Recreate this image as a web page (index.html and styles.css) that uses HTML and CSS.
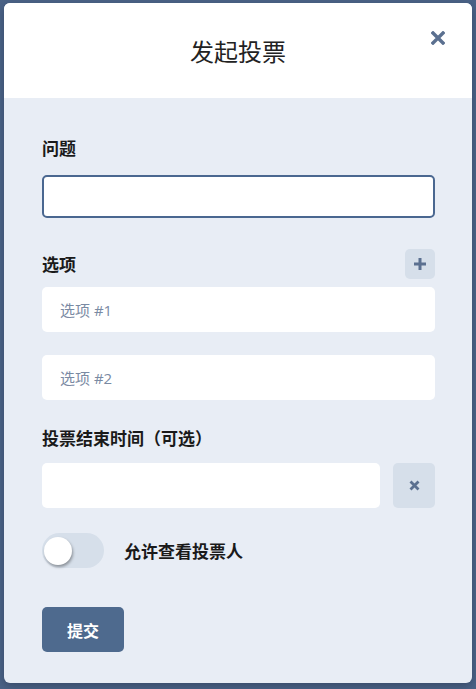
FILE: index.html
```html
<!DOCTYPE html>
<html lang="zh">
<head>
<meta charset="utf-8">
<link rel="stylesheet" href="styles.css">
</head>
<body>
<div class="modal">
  <div class="header">
    <h1 class="title">发起投票</h1>
    <button class="close" aria-label="关闭">
      <svg width="14" height="14" viewBox="0 0 14 14"><path d="M2 2L12 12M12 2L2 12" stroke="#5b7090" stroke-width="3.4" stroke-linecap="square"/></svg>
    </button>
  </div>
  <div class="body">
    <div class="label">问题</div>
    <input class="field field-focus" type="text">
    <div class="row-head">
      <div class="label">选项</div>
      <button class="icon-btn plus" aria-label="添加">
        <svg width="14" height="14" viewBox="0 0 14 14"><path d="M7 1V13M1 7H13" stroke="#5b7090" stroke-width="3"/></svg>
      </button>
    </div>
    <input class="field opt1" type="text" placeholder="选项 #1">
    <input class="field opt2" type="text" placeholder="选项 #2">
    <div class="label time-label">投票结束时间（可选）</div>
    <div class="date-row">
      <input class="field date" type="text">
      <button class="icon-btn clear" aria-label="清除">
        <svg width="11" height="11" viewBox="0 0 11 11"><path d="M1.5 1.5L9.5 9.5M9.5 1.5L1.5 9.5" stroke="#5b7090" stroke-width="2.8"/></svg>
      </button>
    </div>
    <div class="toggle-row">
      <span class="toggle"><span class="knob"></span></span>
      <span class="toggle-label">允许查看投票人</span>
    </div>
    <button class="submit">提交</button>
  </div>
</div>
</body>
</html>
```

FILE: styles.css
```css
* { box-sizing: border-box; }
html, body { margin: 0; padding: 0; }
body {
  background: #4b6387;
  font-family: "Noto Sans CJK SC", "Noto Sans", sans-serif;
  width: 476px;
  height: 689px;
  overflow: hidden;
}
.modal {
  margin: 3px 4px 0 4px;
  width: 468px;
  height: 680px;
  border-radius: 6px;
  overflow: hidden;
  background: #e8edf5;
  box-shadow: 0 3px 8px rgba(20, 30, 50, 0.35);
  display: flex;
  flex-direction: column;
}
.header {
  position: relative;
  height: 95px;
  background: #ffffff;
  display: flex;
  align-items: center;
  justify-content: center;
}
.title {
  margin: 0;
  font-size: 24px;
  font-weight: 400;
  color: #222;
  line-height: 32px;
}
.close {
  position: absolute;
  right: 27px;
  top: 28px;
  width: 14px;
  height: 14px;
  padding: 0;
  border: 0;
  background: none;
  display: flex;
}
.body {
  padding: 37px 37px 0 38px;
  display: flex;
  flex-direction: column;
  align-items: flex-start;
}
.label {
  font-size: 17px;
  font-weight: 700;
  line-height: 26px;
  color: #1a1a1a;
}
.field {
  display: block;
  width: 393px;
  height: 45px;
  border: 0;
  border-radius: 5px;
  background: #fff;
  padding: 0 18px;
  font-family: "Open Sans", "Noto Sans CJK SC", sans-serif;
  font-size: 15px;
  outline: none;
}
.field::placeholder { color: #7a8aa3; }
.field-focus {
  margin-top: 14px;
  height: 43px;
  border: 2px solid #4a6790;
}
.row-head {
  margin-top: 31px;
  width: 393px;
  height: 30px;
  display: flex;
  justify-content: space-between;
  align-items: center;
}
.icon-btn {
  border: 0;
  padding: 0;
  background: #d6dfea;
  border-radius: 5px;
  display: flex;
  align-items: center;
  justify-content: center;
}
.plus { width: 30px; height: 30px; }
.opt1 { margin-top: 8px; }
.opt2 { margin-top: 23px; }
.time-label { margin-top: 25px; }
.date-row {
  margin-top: 12px;
  display: flex;
  gap: 13px;
}
.date { width: 338px; }
.clear { width: 42px; height: 45px; }
.toggle-row {
  margin-top: 25px;
  display: flex;
  align-items: center;
  gap: 20px;
}
.toggle {
  position: relative;
  width: 62px;
  height: 35px;
  border-radius: 18px;
  background: #d6dfea;
  display: block;
}
.knob {
  position: absolute;
  left: 2px;
  top: 4px;
  width: 28px;
  height: 28px;
  border-radius: 50%;
  background: #fff;
  box-shadow: 1px 2px 3px rgba(0, 0, 0, 0.35);
}
.toggle-label {
  font-size: 17px;
  font-weight: 700;
  color: #1a1a1a;
  line-height: 26px;
}
.submit {
  margin-top: 39px;
  width: 82px;
  height: 45px;
  border: 0;
  border-radius: 5px;
  background: #4e6a8e;
  color: #fff;
  font-family: inherit;
  font-size: 16px;
  font-weight: 700;
}
```
